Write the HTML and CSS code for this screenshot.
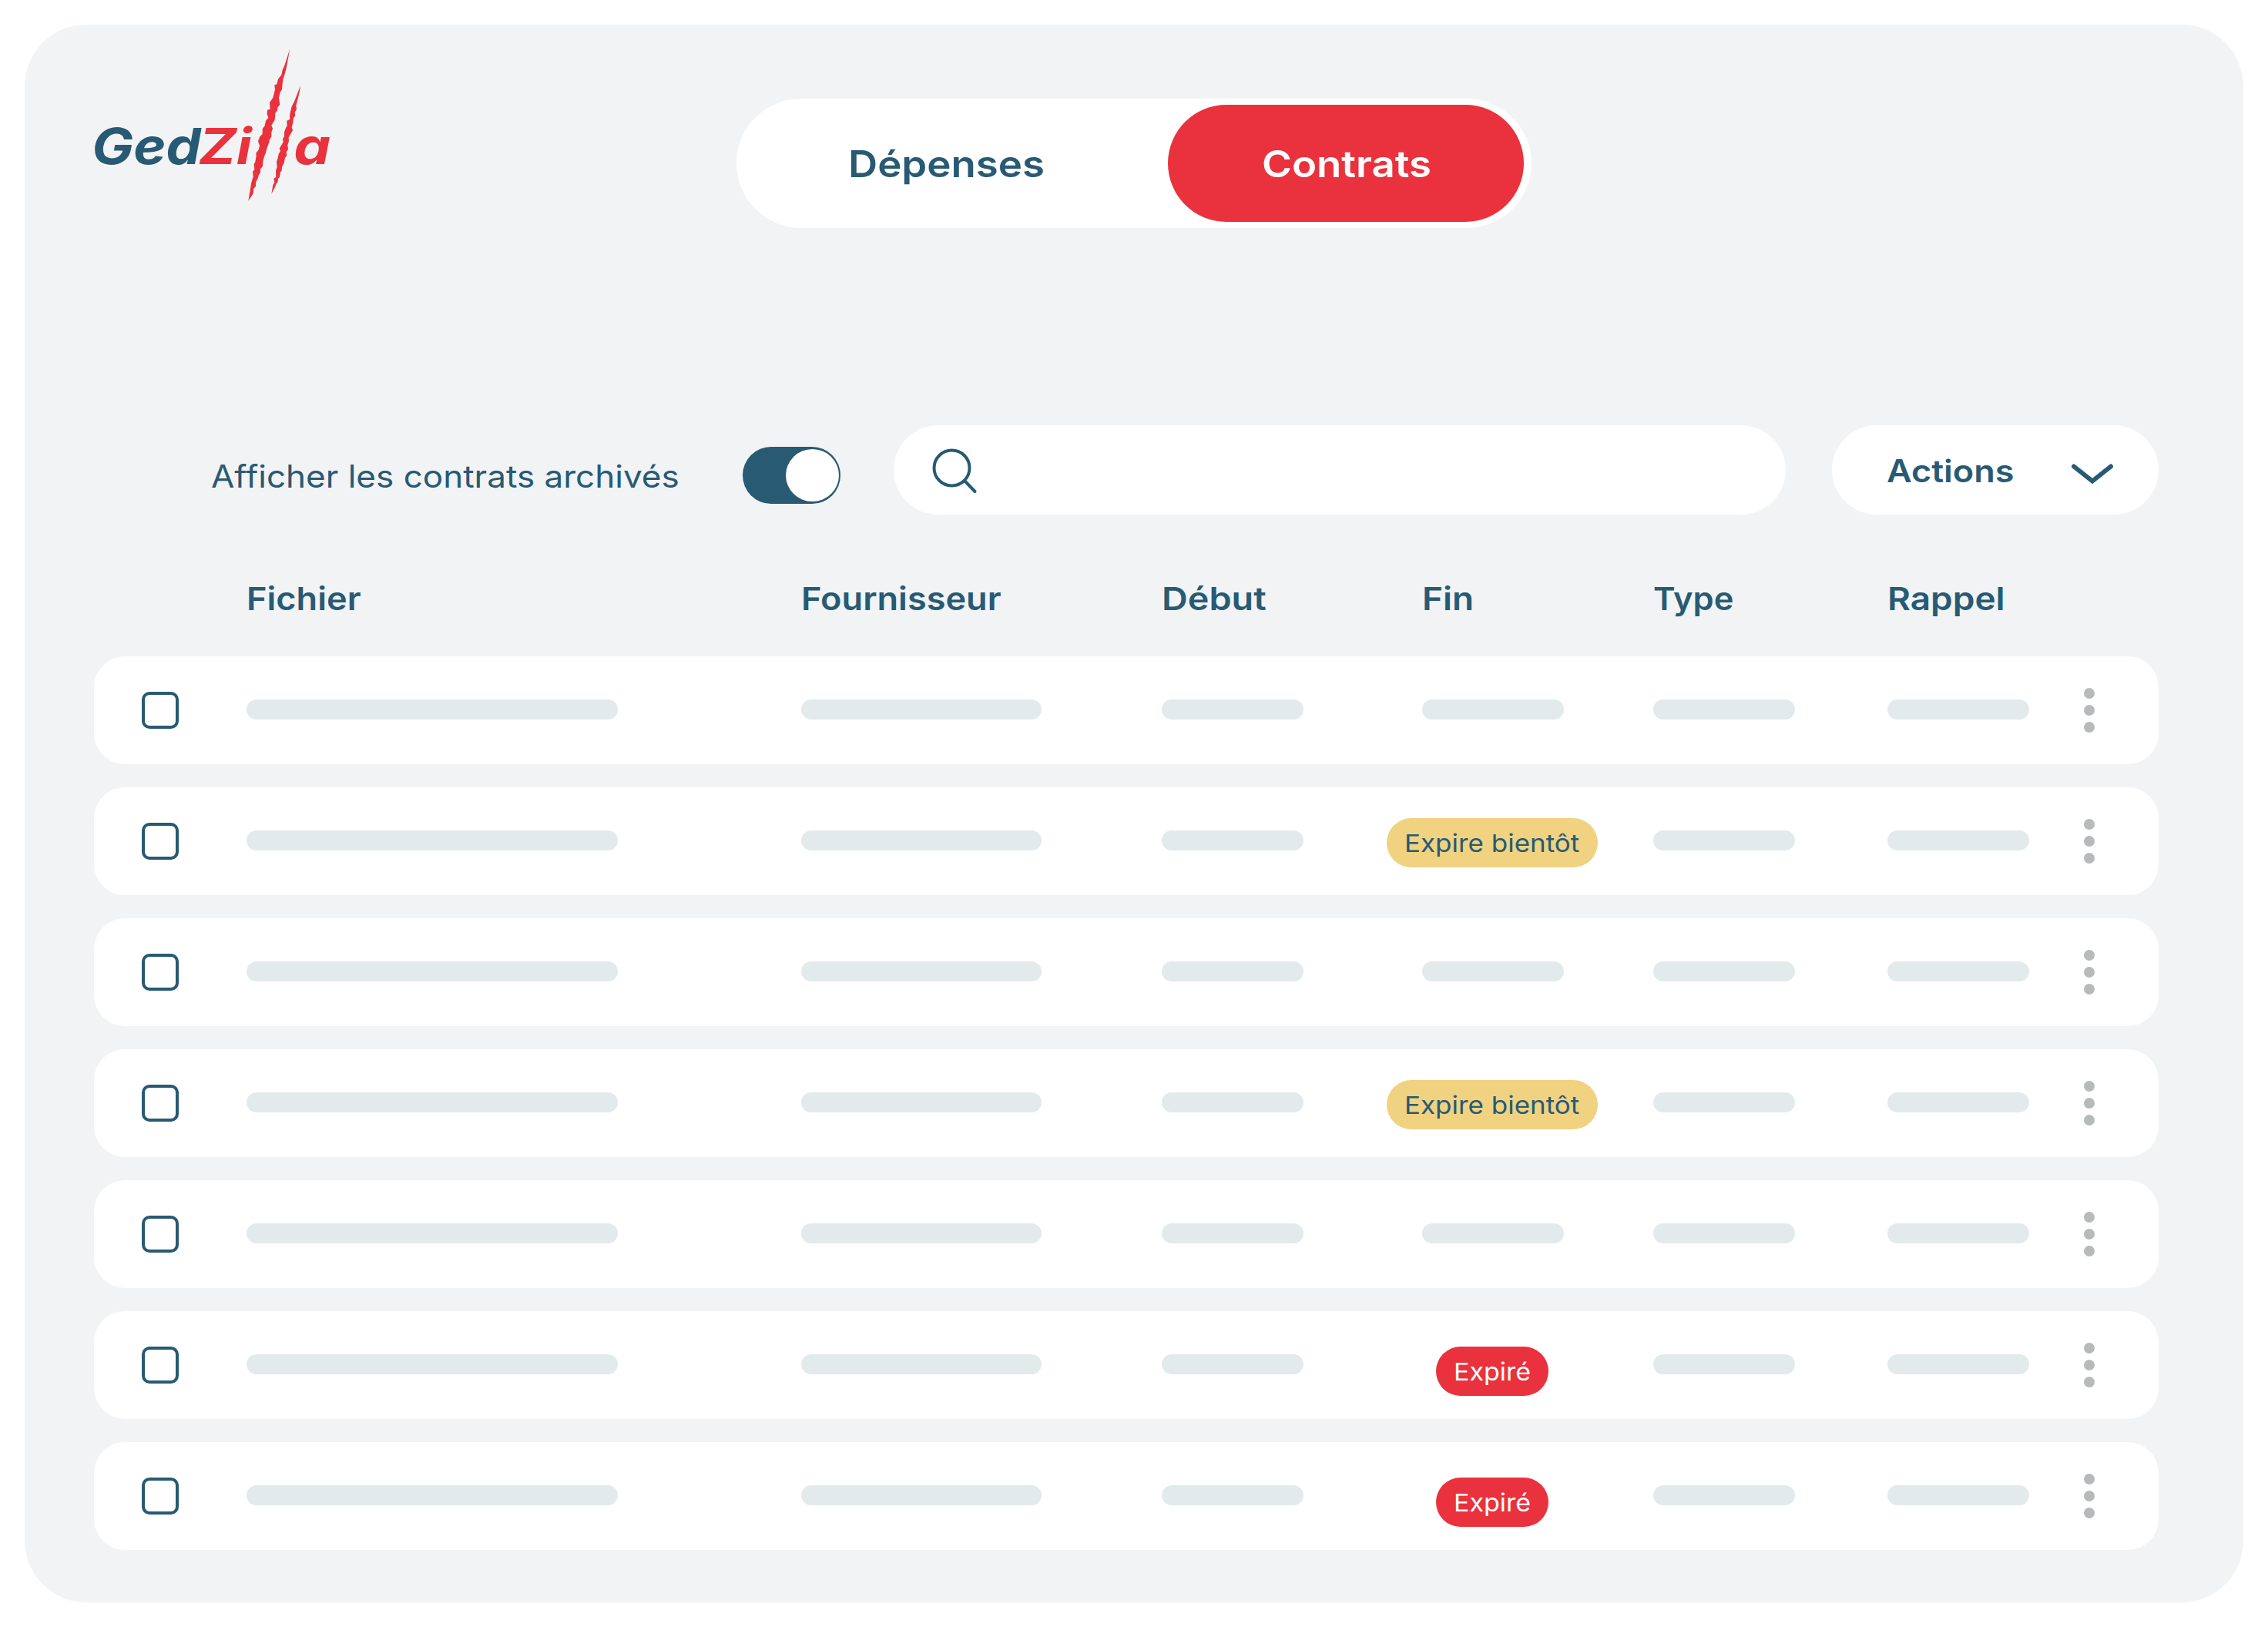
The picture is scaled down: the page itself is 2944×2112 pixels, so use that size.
FILE: index.html
```html
<!DOCTYPE html>
<html lang="fr">
<head>
<meta charset="utf-8">
<title>GedZilla – Contrats</title>
<link rel="stylesheet" href="styles.css">
</head>
<body>
<main class="panel">
  <header class="header">
    <svg class="logo" viewBox="0 0 1050 720" role="img" aria-label="GedZilla">
      <g class="logo-text">
        <text class="logo-ged" x="58" y="519" textLength="424" lengthAdjust="spacingAndGlyphs">Ged</text>
        <text x="474" y="519" textLength="206" lengthAdjust="spacingAndGlyphs">Zi</text>
        <text x="844" y="519" textLength="144" lengthAdjust="spacingAndGlyphs">a</text>
      </g>
      <path class="claw" d="M829 70 808 135 800 152 796 172 783 188 778 208 769 211 771 228 763 260 750 280 752 305 741 308 740 325 745 338 735 350 731 370 722 382 722 402 712 412 705 430 711 448 708 462 697 476 698 488 694 510 689 520 691 540 684 549 686 568 679 590 667 662 686 634 688 615 696 605 696 590 704 575 708 560 714 552 714 538 723 528 724 508 729 490 735 475 740 455 748 435 749 425 757 412 757 395 762 380 757 368 770 347 772 320 780 310 782 297 790 288 786 262 791 240 798 228 800 205 802 190 810 165 816 140Z"/>
      <path class="claw" d="M870 213 856 250 846 275 836 295 831 315 828 330 829 345 817 350 818 370 812 380 807 395 807 412 801 420 803 433 796 445 788 458 792 468 785 480 782 495 777 510 779 530 774 545 775 570 766 575 769 590 763 600 757 635 772 607 775 597 782 588 783 575 789 570 792 550 797 545 798 530 806 515 810 495 817 485 815 472 822 462 820 445 825 430 824 415 830 405 840 388 836 375 841 358 843 340 850 330 848 318 855 305 853 290 860 265 866 240Z"/>
    </svg>
    <nav class="tabs">
      <a class="tab"><span class="wide">Dépenses</span></a>
      <a class="tab tab-active"><span class="wide">Contrats</span></a>
    </nav>
  </header>

  <section class="toolbar">
    <span class="archive-label"><span class="wide wide-label">Afficher les contrats archivés</span></span>
    <span class="toggle"><span class="knob"></span></span>
    <div class="search">
      <svg class="search-icon" viewBox="0 0 60 60"><circle cx="25.5" cy="25.5" r="23"/><path d="M42 42 55.500 56"/></svg>
    </div>
    <button class="actions"><span class="wide wide-actions">Actions</span>
      <svg class="chevron" viewBox="0 0 56 30"><path d="M4 4.500 28 23.500 52 4.500"/></svg>
    </button>
  </section>

  <div class="grid head">
    <span></span>
    <span class="wide">Fichier</span>
    <span class="wide">Fournisseur</span>
    <span class="wide wide-debut">Début</span>
    <span class="wide wide-fin">Fin</span>
    <span class="wide wide-type">Type</span>
    <span class="wide wide-rappel">Rappel</span>
  </div>
  <div class="rows" id="rows"></div>
</main>
<script src="rows.js"></script>
</body>
</html>
```
FILE: rows.js
```js
const bar = (size) => `<span class="bar ${size}"></span>`;
const fin = {
  none: bar('short'),
  soon: '<span class="badge soon"><span class="wide wide-soon">Expire bientôt</span></span>',
  expired: '<span class="badge expired"><span class="wide wide-expired">Expiré</span></span>'
};
document.getElementById('rows').innerHTML = ['none', 'soon', 'none', 'soon', 'none', 'expired', 'expired']
  .map((state) => `<div class="grid row">
    <span class="checkbox"></span>${bar('long')}${bar('medium')}${bar('short')}
    <span class="end">${fin[state]}</span>${bar('short')}${bar('short')}
    <span class="dots"><i></i><i></i><i></i></span>
  </div>`)
  .join('');
```
FILE: styles.css
```css
:root {
  --navy: #285a73;
  --red: #e9323d;
}
* { box-sizing: border-box; }
body {
  margin: 0;
  padding: 32px;
  background: #fff;
  color: var(--navy);
  font-family: Inter, "Liberation Sans", sans-serif;
}
.panel {
  width: 2880px;
  height: 2048px;
  border-radius: 80px;
  background: #f1f3f4;
}

/* Extended letterforms: each label is stretched from its left edge */
.wide {
  --stretch: 1.1;
  display: inline-block;
  transform: scaleX(var(--stretch));
  transform-origin: left center;
  white-space: nowrap;
}
.wide-label { --stretch: 1.087; }
.wide-actions { --stretch: 1.11; }
.wide-debut { --stretch: 1.14; }
.wide-fin { --stretch: 1.12; }
.wide-type { --stretch: 1.06; }
.wide-rappel { --stretch: 1.12; }
.wide-soon { --stretch: 1.11; }
.wide-expired { --stretch: 1.08; }

.header {
  display: flex;
  align-items: flex-start;
  padding: 8px 0 0 68px;
}
.logo { width: 350px; height: 240px; display: block; }
.logo-text { font-size: 195px; font-weight: 750; font-style: italic; fill: var(--red); }
.logo-ged { fill: var(--navy); }
.claw { fill: var(--red); }
.tabs {
  display: flex;
  width: 1032px;
  height: 168px;
  margin: 88px 0 0 506px;
  padding: 8px 10px 8px 0;
  border-radius: 84px;
  background: #fff;
}
.tab {
  display: flex;
  align-items: center;
  width: 560px;
  padding-left: 145px;
  font-size: 48px;
  font-weight: 560;
}
.tab-active {
  width: 462px;
  padding-left: 122px;
  border-radius: 76px;
  background: var(--red);
  color: #fff;
}

.toolbar {
  display: flex;
  align-items: center;
  height: 116px;
  margin-top: 256px;
  padding-left: 242px;
}
.archive-label {
  width: 610px;
  padding-top: 16px;
  font-size: 40.500px;
  font-weight: 440;
}
.toggle {
  display: flex;
  justify-content: flex-end;
  width: 127px;
  height: 74px;
  margin: 14px 0 0 80px;
  padding: 3px 2px;
  border-radius: 37px;
  background: var(--navy);
}
.knob { width: 69px; height: 68px; border-radius: 50%; background: #fff; }
.search {
  width: 1158px;
  height: 116px;
  margin-left: 69px;
  padding: 30px 0 0 50px;
  border-radius: 58px;
  background: #fff;
}
.search-icon {
  display: block;
  width: 60px;
  height: 60px;
  fill: none;
  stroke: var(--navy);
  stroke-width: 4;
  stroke-linecap: round;
}
.actions {
  display: flex;
  align-items: center;
  width: 424px;
  height: 116px;
  margin-left: 60px;
  padding: 2px 58px 0 71px;
  border: 0;
  border-radius: 58px;
  background: #fff;
  color: var(--navy);
  font: 560 40.500px Inter, sans-serif;
}
.chevron {
  width: 56px;
  height: 30px;
  margin: 10px 0 0 auto;
  fill: none;
  stroke: var(--navy);
  stroke-width: 6;
  stroke-linecap: round;
}

.grid {
  display: grid;
  grid-template-columns: 136px 720px 468px 338px 300px 304px 255px 1fr;
  align-items: center;
}
.head {
  height: 60px;
  margin: 79px 110px 0 90px;
  padding-left: 62px;
  font-size: 41px;
  font-weight: 560;
}
.rows {
  display: flex;
  flex-direction: column;
  gap: 30px;
  margin: 45px 110px 0 90px;
}
.row {
  height: 140px;
  padding-left: 62px;
  border-radius: 40px;
  background: #fff;
}
.checkbox { width: 48px; height: 48px; border: 4px solid var(--navy); border-radius: 10px; }
.bar { flex: none; height: 26px; margin-bottom: 2px; border-radius: 13px; background: #e3eaeb; }
.long { width: 482px; }
.medium { width: 312px; }
.short { width: 184px; }
.end { display: flex; justify-content: center; width: 184px; }
.badge {
  flex: none;
  height: 64px;
  border-radius: 32px;
  font-size: 31.500px;
  font-weight: 430;
  line-height: 65px;
}
.soon { width: 274px; margin: 4px 2px 0 0; padding-left: 23px; background: #f0d281; }
.expired { width: 146px; margin: 16px 2px 0 0; padding-left: 23px; background: var(--red); color: #fff; }
.dots { display: flex; flex-direction: column; gap: 8px; }
.dots i { width: 14px; height: 14px; border-radius: 50%; background: #b7babb; }
```
